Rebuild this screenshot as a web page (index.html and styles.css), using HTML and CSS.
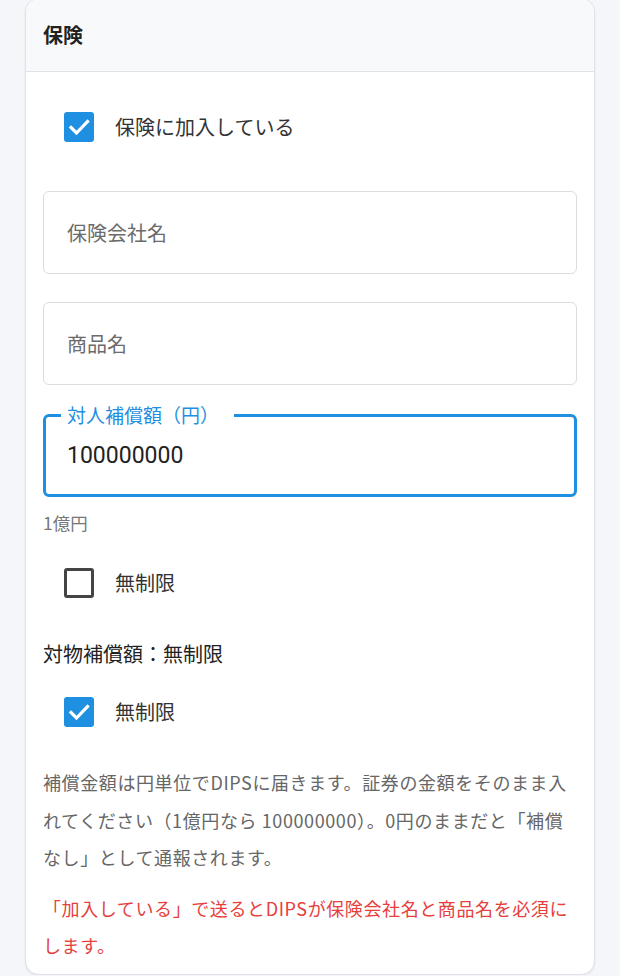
FILE: index.html
```html
<!DOCTYPE html>
<html lang="ja">
<head>
<meta charset="utf-8">
<title>保険</title>
<link rel="stylesheet" href="styles.css">
</head>
<body>
<section class="card">
  <header class="card-head">保険</header>
  <div class="card-body">
    <label class="check-row">
      <span class="box checked"><svg viewBox="0 0 30 30" width="30" height="30"><polyline points="7,15.5 12.5,21 23.5,9.5" fill="none" stroke="#fff" stroke-width="3.2" stroke-linecap="square"/></svg></span>
      <span class="check-text">保険に加入している</span>
    </label>

    <div class="field field-first"><span class="placeholder">保険会社名</span></div>
    <div class="field field-gap"><span class="placeholder">商品名</span></div>
    <div class="field field-focused">
      <span class="float-label">対人補償額（円）</span>
      <span class="value">100000000</span>
    </div>
    <div class="helper">1億円</div>

    <label class="check-row row-2">
      <span class="box"></span>
      <span class="check-text">無制限</span>
    </label>

    <div class="subhead">対物補償額：無制限</div>

    <label class="check-row row-3">
      <span class="box checked"><svg viewBox="0 0 30 30" width="30" height="30"><polyline points="7,15.5 12.5,21 23.5,9.5" fill="none" stroke="#fff" stroke-width="3.2" stroke-linecap="square"/></svg></span>
      <span class="check-text">無制限</span>
    </label>

    <p class="note">補償金額は円単位でDIPSに届きます。証券の金額をそのまま入れてください（1億円なら 100000000）。0円のままだと「補償なし」として通報されます。</p>
    <p class="warn">「加入している」で送るとDIPSが保険会社名と商品名を必須にします。</p>
  </div>
</section>
</body>
</html>
```
FILE: styles.css
```css
html, body {
  margin: 0;
  padding: 0;
  background: #f4f6f9;
}
body {
  font-family: "Noto Sans CJK JP", "Noto Sans", sans-serif;
  color: #333;
  overflow: hidden;
}
.card {
  margin: -2px 25px 0 25px;
  background: #fff;
  border: 1px solid #dfe2e6;
  border-radius: 14px;
  box-shadow: 0 1px 2px rgba(0,0,0,0.08);
  overflow: hidden;
}
.card-head {
  height: 72px;
  line-height: 72px;
  padding-left: 17px;
  background: #f8f9fb;
  border-bottom: 1px solid #dfe2e6;
  font-size: 20px;
  font-weight: 700;
  color: #222;
}
.card-body {
  padding: 30px 17px 10px 17px;
}
.check-row {
  display: flex;
  align-items: center;
  height: 50px;
  padding-left: 21px;
}
.box {
  width: 30px;
  height: 30px;
  box-sizing: border-box;
  border: 3px solid #444;
  border-radius: 3px;
  flex: none;
}
.box.checked {
  border: none;
  background: #1e8fe1;
}
.box svg { display: block; }
.check-text {
  margin-left: 21px;
  font-size: 20px;
  color: #333;
  line-height: 28px;
}
.field {
  height: 83px;
  box-sizing: border-box;
  border: 1px solid #dadde1;
  border-radius: 6px;
  display: flex;
  align-items: center;
  padding: 0 23px;
  position: relative;
}
.field-first { margin-top: 39px; }
.field-gap { margin-top: 28px; }
.placeholder {
  font-size: 20px;
  color: #6b6b6b;
}
.field-focused {
  margin-top: 29px;
  border: 3px solid #1e8fe1;
  padding: 0 21px;
}
.float-label {
  position: absolute;
  top: -13px;
  left: 15px;
  padding: 0 15px 0 6px;
  background: #fff;
  font-size: 19px;
  line-height: 22px;
  color: #1e8fe1;
}
.value {
  font-family: Roboto, "Noto Sans CJK JP", sans-serif;
  font-size: 23px;
  color: #222;
}
.helper {
  margin-top: 14px;
  font-size: 17.5px;
  line-height: 24px;
  color: #777;
}
.row-2 { margin-top: 23px; }
.subhead {
  margin-top: 31px;
  font-size: 20px;
  line-height: 29px;
  color: #222;
}
.row-3 { margin-top: 19px; }
.note {
  margin: 27px 0 0 0;
  font-size: 18px;
  line-height: 37.5px;
  color: #666;
  letter-spacing: 0.6px;
}
.warn {
  margin: 13px 0 0 0;
  font-size: 18px;
  line-height: 37px;
  color: #e5403c;
  letter-spacing: 0.6px;
}
```
